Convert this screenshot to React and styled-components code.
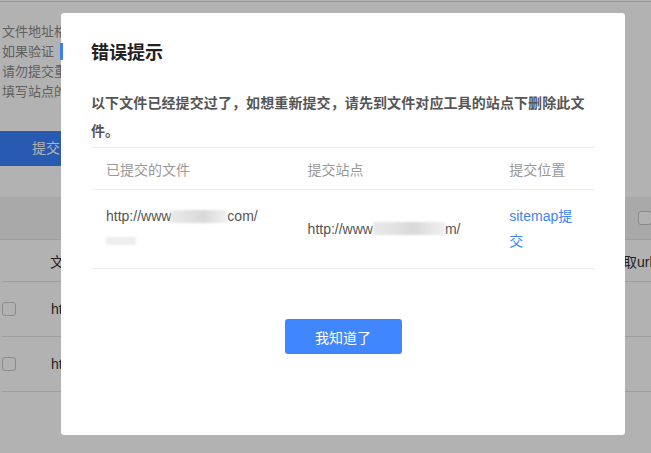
import React from "react";
import styled, { createGlobalStyle } from "styled-components";

const GlobalStyle = createGlobalStyle`
  html, body {
    margin: 0;
    padding: 0;
    background: #ffffff;
    font-family: "Liberation Sans", "Noto Sans CJK SC", sans-serif;
  }
  * {
    box-sizing: border-box;
  }
`;

export default function App() {
  const files = [
    {
      file: { head: "http://www", mid: 56, tail: "com/", extra: 30 },
      site: { head: "http://www", mid: 72, tail: "m/" },
      place: "sitemap提交",
    },
  ];

  return (
    <>
      <GlobalStyle />
      <Page>
        <TopRule />
        <Notes>
          <p>文件地址格式：每行一个链接</p>
          <p>如果验证</p>
          <p>请勿提交重复的链接</p>
          <p>填写站点的完整地址</p>
        </Notes>
        <SubmitButton>提交</SubmitButton>
        <BgTable>
          <BgToolbar>
            <BgCheck />
          </BgToolbar>
          <BgHead>
            <span />
            <span>文件地址</span>
            <BgRight>获取url地址</BgRight>
          </BgHead>
          <BgRow>
            <BgCheck />
            <span>http://www.example.com/sitemap.xml</span>
          </BgRow>
          <BgRow>
            <BgCheck />
            <span>http://www.example.com/urls.txt</span>
          </BgRow>
        </BgTable>
      </Page>

      <Overlay />
      <FocusMark />

      <Dialog>
        <Title>错误提示</Title>
        <Message>
          以下文件已经提交过了，如想重新提交，请先到文件对应工具的站点下删除此文件。
        </Message>
        <Grid>
          <HeadRow>
            <HeadCell>已提交的文件</HeadCell>
            <HeadCell>提交站点</HeadCell>
            <HeadCell>提交位置</HeadCell>
          </HeadRow>
          {files.map((row, i) => (
            <BodyRow key={i}>
              <Cell>
                {row.file.head}
                <Masked $w={row.file.mid} />
                {row.file.tail}
                <Masked $w={row.file.extra} $light />
              </Cell>
              <Cell>
                {row.site.head}
                <Masked $w={row.site.mid} />
                {row.site.tail}
              </Cell>
              <Cell>
                <LinkText href="#">{row.place}</LinkText>
              </Cell>
            </BodyRow>
          ))}
        </Grid>
        <Footer>
          <OkButton>我知道了</OkButton>
        </Footer>
      </Dialog>
    </>
  );
}

// Background page
const Page = styled.div`
  width: 651px;
  height: 453px;
  overflow: hidden;
  background: #ffffff;
`;

const TopRule = styled.div`
  margin-top: 1px;
  height: 1px;
  background: #dcdcdc;
`;

const Notes = styled.div`
  margin-top: 20px;
  padding-left: 2px;
  p {
    margin: 0;
    font-size: 13px;
    line-height: 20px;
    color: #8a8a8a;
    white-space: nowrap;
  }
`;

const SubmitButton = styled.div`
  margin-top: 29px;
  width: 92px;
  height: 35px;
  line-height: 35px;
  text-align: center;
  background: #3c82ff;
  color: #ffffff;
  font-size: 14px;
`;

const BgTable = styled.div`
  margin-top: 31px;
  padding-left: 2px;
`;

const BgToolbar = styled.div`
  height: 43px;
  margin-left: -2px;
  background: #f3f3f3;
  border-bottom: 1px solid #e2e2e2;
  display: flex;
  align-items: center;
  justify-content: flex-end;
  div {
    margin-right: -1px;
  }
`;

const BgHead = styled.div`
  height: 42px;
  display: grid;
  grid-template-columns: 48px 559px auto;
  align-items: center;
  border-bottom: 1px solid #e2e2e2;
  font-size: 14px;
  color: #333;
  white-space: nowrap;
`;

const BgRight = styled.span`
  white-space: nowrap;
`;

const BgRow = styled.div`
  height: 55px;
  display: grid;
  grid-template-columns: 49px 1fr;
  align-items: center;
  border-bottom: 1px solid #e2e2e2;
  font-size: 14px;
  color: #333;
`;

const BgCheck = styled.div`
  width: 14px;
  height: 14px;
  border: 1px solid #c8c8c8;
  border-radius: 3px;
  background: #ffffff;
`;

const Overlay = styled.div`
  position: fixed;
  inset: 0;
  background: rgba(0, 0, 0, 0.3);
`;

const FocusMark = styled.div`
  position: fixed;
  left: 60px;
  top: 43px;
  width: 3px;
  height: 17px;
  background: #3d7ef6;
  z-index: 3;
`;

// Dialog
const Dialog = styled.div`
  position: fixed;
  left: 61px;
  top: 13px;
  width: 564px;
  height: 422px;
  background: #ffffff;
  border-radius: 3px;
  padding: 28px 30px 0;
  z-index: 2;
  display: flex;
  flex-direction: column;
`;

const Title = styled.h2`
  margin: 0;
  font-size: 18px;
  line-height: 24px;
  font-weight: 700;
  color: #222222;
`;

const Message = styled.p`
  margin: 24px 0 0;
  font-size: 14px;
  line-height: 28px;
  font-weight: 700;
  letter-spacing: 0.1px;
  color: #555555;
`;

const Grid = styled.div`
  margin-top: 2px;
  border-top: 1px solid #eeeeee;
`;

const HeadRow = styled.div`
  display: grid;
  grid-template-columns: 40% 40% 20%;
  height: 42px;
  align-items: center;
  border-bottom: 1px solid #eeeeee;
`;

const HeadCell = styled.div`
  padding: 0 15px;
  font-size: 14px;
  color: #999999;
`;

const BodyRow = styled.div`
  display: grid;
  grid-template-columns: 40% 40% 20%;
  align-items: center;
  border-bottom: 1px solid #eeeeee;
`;

const Cell = styled.div`
  padding: 14px 15px;
  font-size: 14px;
  line-height: 25px;
  color: #555555;
  word-break: break-all;
`;

const Masked = styled.span`
  display: inline-block;
  vertical-align: middle;
  width: ${(p) => p.$w}px;
  height: ${(p) => (p.$light ? 8 : 13)}px;
  margin-top: -2px;
  background: ${(p) =>
    p.$light
      ? "#eeeeee"
      : "linear-gradient(90deg, #e9e9e9 0%, #e2e2e2 30%, #d8d8d8 55%, #e6e6e6 80%, #f0f0f0 100%)"};
  filter: blur(1px);
`;

const LinkText = styled.a`
  color: #3d84f7;
  text-decoration: none;
`;

const Footer = styled.div`
  margin-top: 50px;
  display: flex;
  justify-content: center;
`;

const OkButton = styled.button`
  width: 117px;
  height: 35px;
  border: none;
  border-radius: 3px;
  background: #3f86ff;
  color: #ffffff;
  font-family: inherit;
  font-size: 14px;
  cursor: pointer;
`;
